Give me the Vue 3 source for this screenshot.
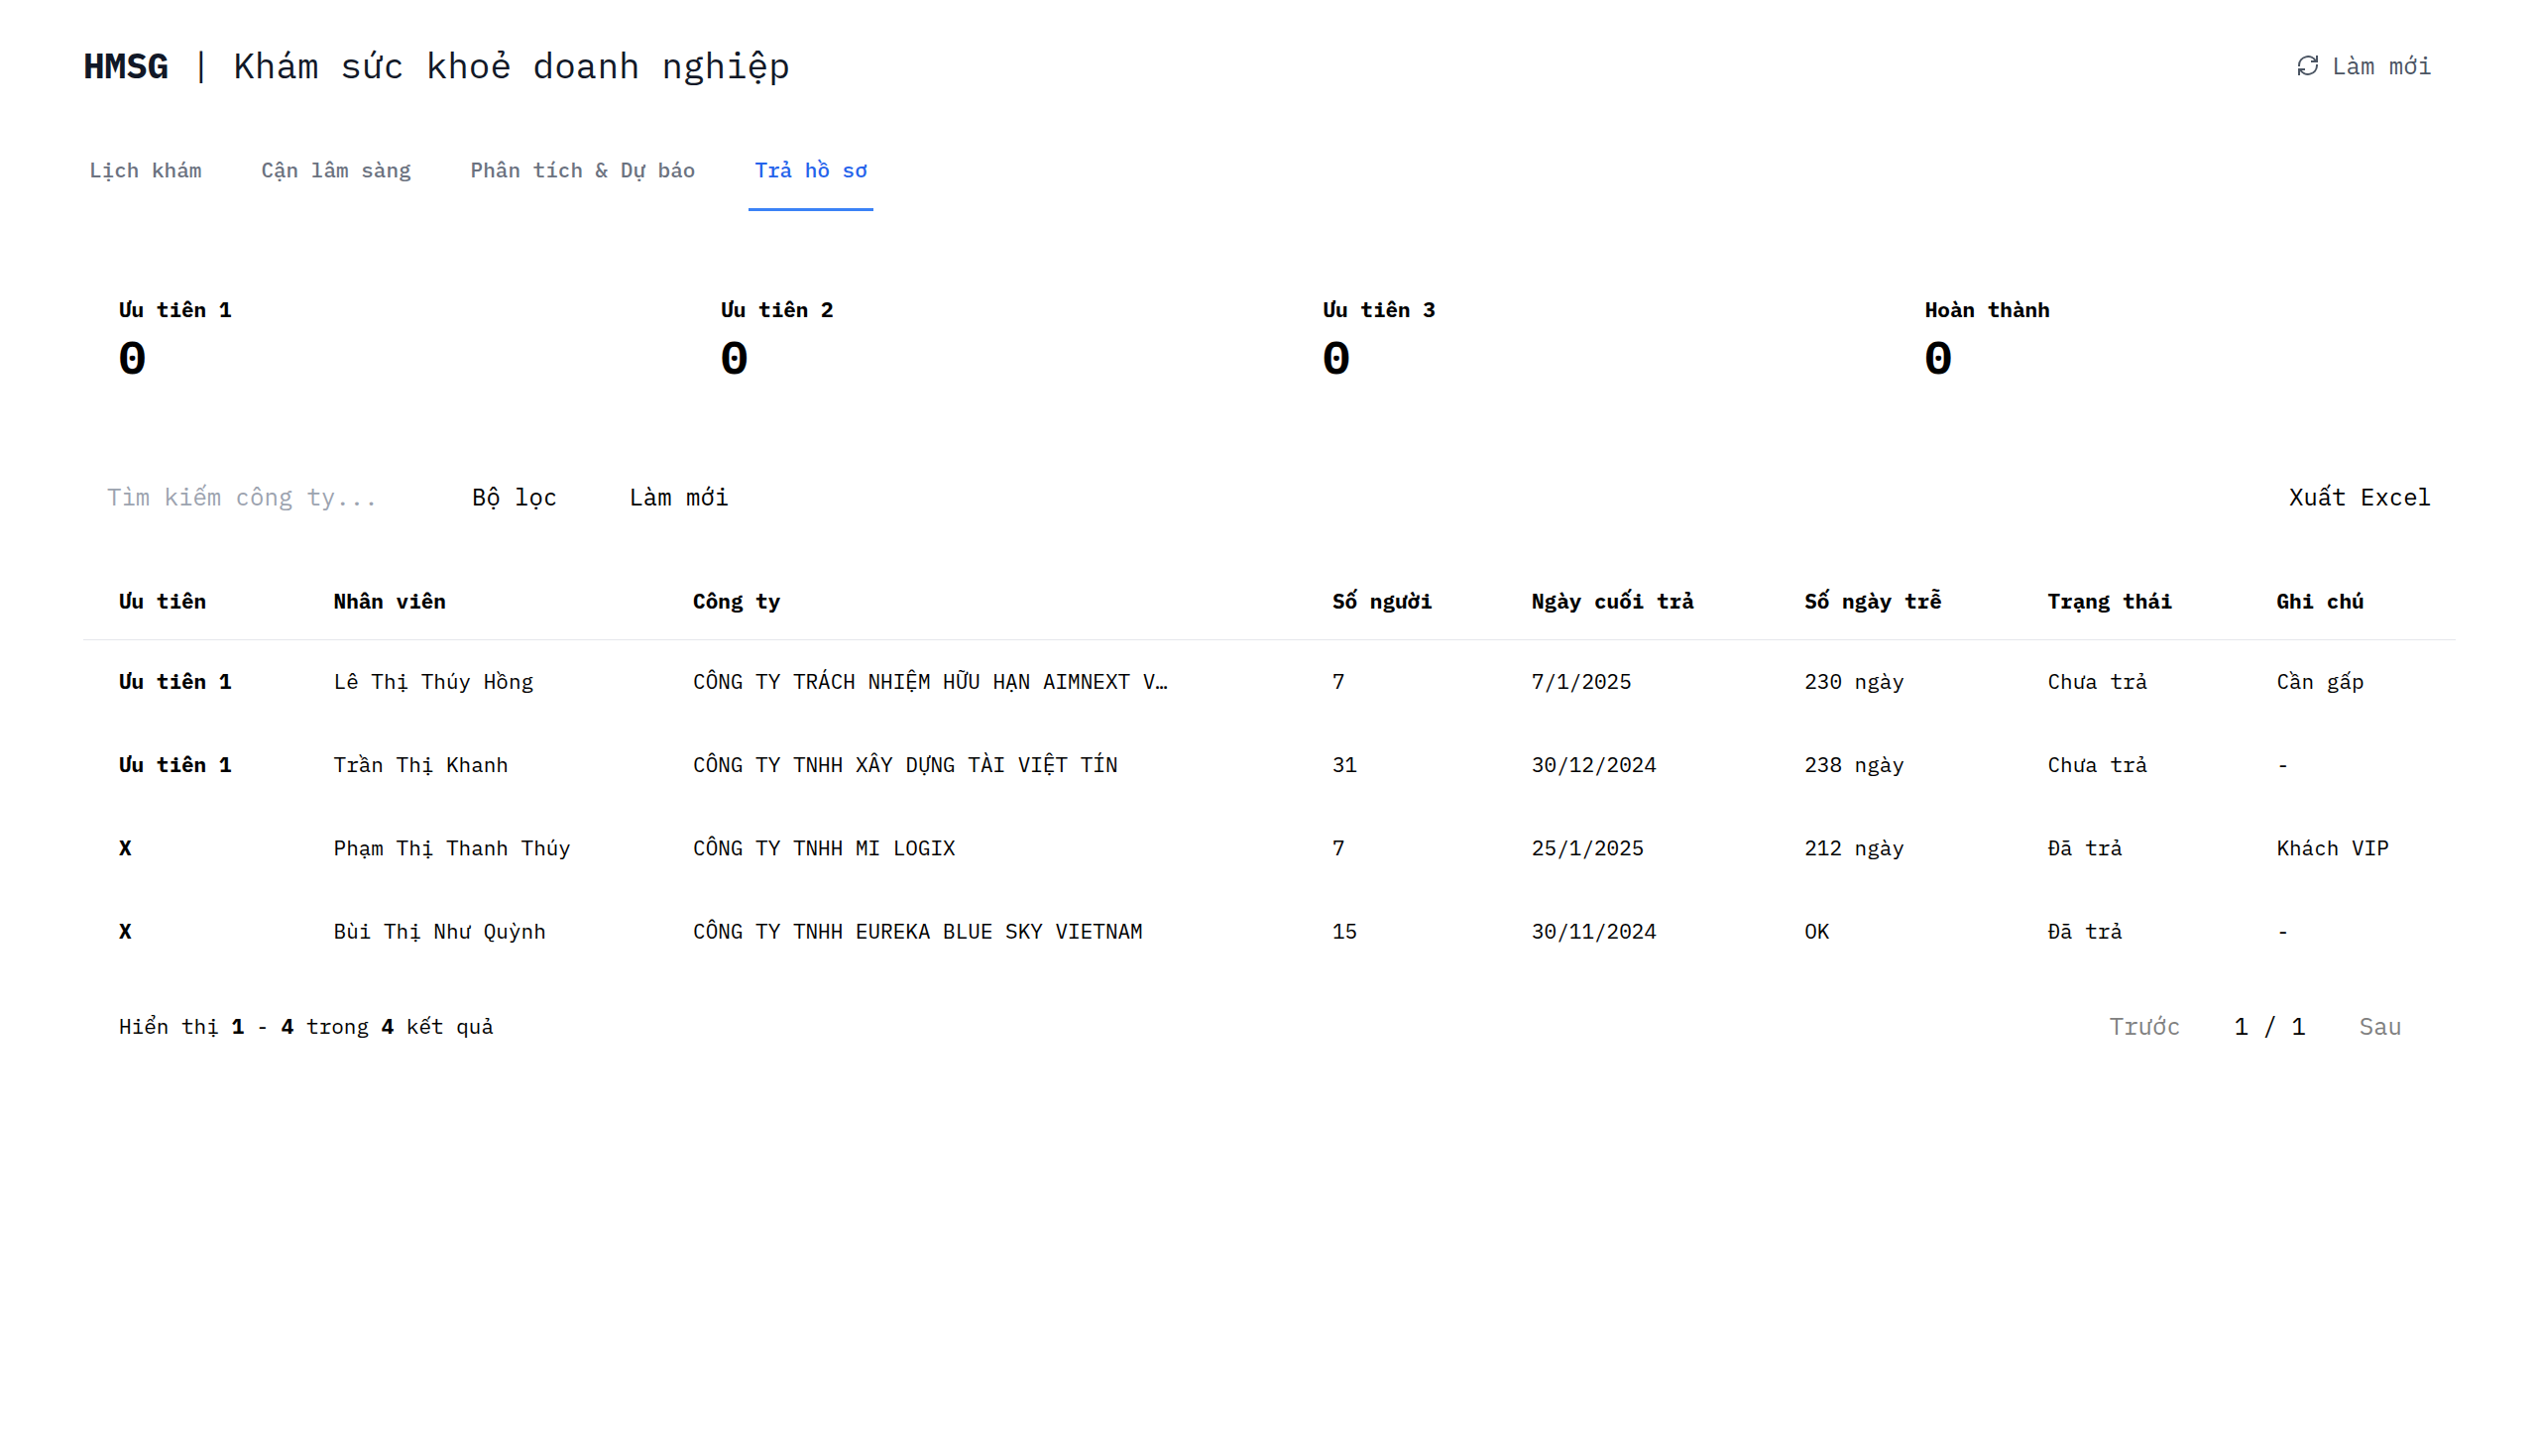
<script setup>
import { ref } from 'vue'

const tabs = ['Lịch khám', 'Cận lâm sàng', 'Phân tích & Dự báo', 'Trả hồ sơ']
const activeTab = ref('Trả hồ sơ')
const search = ref('')

const stats = [
  { label: 'Ưu tiên 1', value: 0 },
  { label: 'Ưu tiên 2', value: 0 },
  { label: 'Ưu tiên 3', value: 0 },
  { label: 'Hoàn thành', value: 0 },
]

const columns = ['Ưu tiên', 'Nhân viên', 'Công ty', 'Số người', 'Ngày cuối trả', 'Số ngày trễ', 'Trạng thái', 'Ghi chú']

const rows = [
  { priority: 'Ưu tiên 1', staff: 'Lê Thị Thúy Hồng', company: 'CÔNG TY TRÁCH NHIỆM HỮU HẠN AIMNEXT V…', people: 7, due: '7/1/2025', late: '230 ngày', status: 'Chưa trả', note: 'Cần gấp' },
  { priority: 'Ưu tiên 1', staff: 'Trần Thị Khanh', company: 'CÔNG TY TNHH XÂY DỰNG TÀI VIỆT TÍN', people: 31, due: '30/12/2024', late: '238 ngày', status: 'Chưa trả', note: '-' },
  { priority: 'X', staff: 'Phạm Thị Thanh Thúy', company: 'CÔNG TY TNHH MI LOGIX', people: 7, due: '25/1/2025', late: '212 ngày', status: 'Đã trả', note: 'Khách VIP' },
  { priority: 'X', staff: 'Bùi Thị Như Quỳnh', company: 'CÔNG TY TNHH EUREKA BLUE SKY VIETNAM', people: 15, due: '30/11/2024', late: 'OK', status: 'Đã trả', note: '-' },
]
</script>

<template>
  <div class="page">
    <header class="top">
      <h1><strong>HMSG</strong> | Khám sức khoẻ doanh nghiệp</h1>
      <button type="button" class="refresh">
        <svg class="icon" viewBox="0 0 24 24" fill="none" stroke="currentColor" stroke-width="2" aria-hidden="true">
          <path d="M3 13v-1a9 9 0 0 1 17-4M21 11v1a9 9 0 0 1-17 4" />
          <path d="M21 2v6h-6M3 22v-6h6" />
        </svg>
        Làm mới
      </button>
    </header>

    <nav class="tabs">
      <button
        v-for="tab in tabs"
        :key="tab"
        type="button"
        :class="['tab', { active: tab === activeTab }]"
        @click="activeTab = tab"
      >{{ tab }}</button>
    </nav>

    <main>
      <section class="stats">
        <div v-for="stat in stats" :key="stat.label" class="stat">
          <div class="stat-label">{{ stat.label }}</div>
          <div class="stat-value">{{ stat.value }}</div>
        </div>
      </section>

      <section class="toolbar">
        <input v-model="search" type="text" class="search" placeholder="Tìm kiếm công ty..." aria-label="Tìm kiếm công ty" />
        <button type="button" class="action">Bộ lọc</button>
        <button type="button" class="action">Làm mới</button>
        <button type="button" class="action export">Xuất Excel</button>
      </section>

      <table>
        <colgroup>
          <col class="c-priority" />
          <col class="c-staff" />
          <col class="c-company" />
          <col class="c-people" />
          <col class="c-due" />
          <col class="c-late" />
          <col class="c-status" />
          <col class="c-note" />
        </colgroup>
        <thead>
          <tr>
            <th v-for="column in columns" :key="column" scope="col">{{ column }}</th>
          </tr>
        </thead>
        <tbody>
          <tr v-for="row in rows" :key="row.staff">
            <td class="priority">{{ row.priority }}</td>
            <td>{{ row.staff }}</td>
            <td>{{ row.company }}</td>
            <td>{{ row.people }}</td>
            <td>{{ row.due }}</td>
            <td>{{ row.late }}</td>
            <td>{{ row.status }}</td>
            <td>{{ row.note }}</td>
          </tr>
        </tbody>
      </table>

      <footer class="footer">
        <p>Hiển thị <strong>1</strong> - <strong>4</strong> trong <strong>4</strong> kết quả</p>
        <div class="pager">
          <button type="button" disabled>Trước</button>
          <span>1 / 1</span>
          <button type="button" disabled>Sau</button>
        </div>
      </footer>
    </main>
  </div>
</template>

<style>
body {
  margin: 0;
  background: #fff;
}
</style>

<style scoped>
.page {
  box-sizing: border-box;
  padding: 36px 84px;
  font-family: "IBM Plex Mono", "Liberation Mono", monospace;
  font-size: 24px;
  line-height: 36px;
  color: #000;
}

button,
input {
  margin: 0;
  padding: 0;
  border: 0;
  background: none;
  font: inherit;
  color: inherit;
}

button {
  cursor: pointer;
}

.top {
  display: flex;
  align-items: center;
  justify-content: space-between;
  height: 60px;
}

h1 {
  margin: 0;
  font-size: 36px;
  line-height: 48px;
  font-weight: 400;
  color: #111827;
}

strong {
  font-weight: 700;
}

.refresh {
  display: flex;
  align-items: center;
  gap: 12px;
  padding: 12px 24px;
  color: #4b5563;
}

.icon {
  width: 24px;
  height: 24px;
}

.tabs {
  display: flex;
  gap: 48px;
  margin-top: 36px;
}

.tab {
  padding: 24px 6px;
  border-bottom: 3px solid transparent;
  font-size: 21px;
  line-height: 30px;
  font-weight: 500;
  color: #6b7280;
}

.tab.active {
  border-bottom-color: #3b82f6;
  color: #2563eb;
}

.stats {
  display: grid;
  grid-template-columns: repeat(4, 1fr);
  gap: 36px;
  margin-top: 48px;
}

.stat {
  padding: 36px;
}

.stat-label {
  font-size: 21px;
  line-height: 30px;
  font-weight: 700;
}

.stat-value {
  margin-top: 6px;
  font-size: 45px;
  line-height: 54px;
  font-weight: 700;
}

.toolbar {
  display: flex;
  align-items: center;
  gap: 24px;
  margin-top: 48px;
}

.search {
  box-sizing: border-box;
  width: 344px;
  height: 60px;
  padding: 0 24px;
}

.search::placeholder {
  color: #9ca3af;
  opacity: 1;
}

.action {
  padding: 12px 24px;
}

.export {
  margin-left: auto;
}

table {
  width: 100%;
  margin-top: 36px;
  border-collapse: collapse;
  table-layout: fixed;
  font-size: 21px;
  line-height: 30px;
}

th,
td {
  height: 84px;
  box-sizing: border-box;
  padding: 0 0 0 36px;
  text-align: left;
  white-space: nowrap;
}

th {
  height: 78px;
}

thead tr {
  border-bottom: 1px solid #e5e7eb;
}

th,
.priority {
  font-weight: 700;
}

.c-priority { width: 9.05%; }
.c-staff { width: 15.15%; }
.c-company { width: 26.95%; }
.c-people { width: 8.4%; }
.c-due { width: 11.5%; }
.c-late { width: 10.25%; }
.c-status { width: 9.65%; }
.c-note { width: 9.05%; }

.footer {
  display: flex;
  align-items: center;
  justify-content: space-between;
  padding: 24px 36px;
}

.footer p {
  margin: 0;
  font-size: 21px;
  line-height: 30px;
}

.pager {
  display: flex;
  align-items: center;
  gap: 36px;
}

.pager button {
  padding: 12px 18px;
}

.pager button:disabled {
  color: #808080;
  cursor: default;
}
</style>
